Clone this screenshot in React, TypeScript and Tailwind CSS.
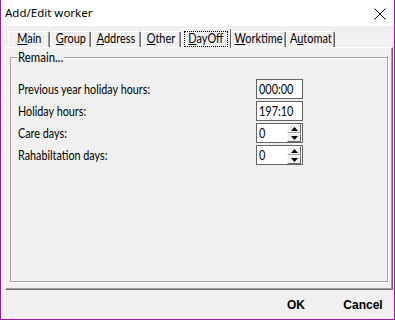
import React from "react";

const lato = { fontFamily: "Lato, 'Liberation Sans', sans-serif" };

type Tab = { label: string; key: number; w: string; selected?: boolean };

const tabs: Tab[] = [
  { label: "Main", key: 0, w: "w-[42px]" },
  { label: "Group", key: 0, w: "w-[41px]" },
  { label: "Address", key: 0, w: "w-[50px]" },
  { label: "Other", key: 0, w: "w-[40px]" },
  { label: "DayOff", key: 0, w: "w-[50px]", selected: true },
  { label: "Worktime", key: 0, w: "w-[55px]" },
  { label: "Automat", key: 1, w: "w-[49px]" },
];

function TabLabel({ t }: { t: Tab }) {
  const a = t.label.slice(0, t.key);
  const b = t.label.slice(t.key, t.key + 1);
  const c = t.label.slice(t.key + 1);
  return (
    <span className="inline-block scale-x-[0.84] text-[13px] leading-none whitespace-nowrap">
      {a}
      <u className="underline-offset-[1px]">{b}</u>
      {c}
    </span>
  );
}

function Up() {
  return (
    <svg width="7" height="4" viewBox="0 0 7 4">
      <path d="M3.5 0 L7 4 L0 4 Z" fill="#000" />
    </svg>
  );
}
function Down() {
  return (
    <svg width="7" height="4" viewBox="0 0 7 4">
      <path d="M0 0 L7 0 L3.5 4 Z" fill="#000" />
    </svg>
  );
}

function Val({ value }: { value: string }) {
  return (
    <span className="flex-1 flex items-center pl-[2px] text-black leading-none">
      <span className="inline-block origin-left scale-x-[0.84] text-[13px] leading-none">{value}</span>
    </span>
  );
}

function SpinBox({ value }: { value: string }) {
  return (
    <div className="h-[20px] w-[47px] border border-[#646464] bg-white flex items-center">
      <Val value={value} />
      <div className="flex flex-col mr-px">
        <div className="w-[14px] h-[9px] bg-[#f0f0f0] border-t border-l border-white border-r border-b border-r-[#696969] border-b-[#a0a0a0] flex items-center justify-center">
          <Up />
        </div>
        <div className="w-[14px] h-[9px] bg-[#f0f0f0] border-t border-l border-white border-r border-b border-r-[#696969] border-b-[#696969] flex items-center justify-center">
          <Down />
        </div>
      </div>
    </div>
  );
}

function TextBox({ value }: { value: string }) {
  return (
    <div className="h-[20px] w-[47px] border border-[#646464] bg-white flex items-center">
      <Val value={value} />
    </div>
  );
}

export default function App() {
  const rows: { label: string; field: React.ReactNode }[] = [
    { label: "Previous year holiday hours:", field: <TextBox value="000:00" /> },
    { label: "Holiday hours:", field: <TextBox value="197:10" /> },
    { label: "Care days:", field: <SpinBox value="0" /> },
    { label: "Rahabiltation days:", field: <SpinBox value="0" /> },
  ];

  return (
    <div className="w-[395px] h-[320px] flex flex-col border-x border-b border-[#9c1c9c] bg-[#f0f0f0] overflow-hidden">
      {/* Title bar */}
      <div className="h-[26px] bg-white flex items-center justify-between pl-[4px] pr-[8px] shrink-0">
        <span className="text-[11.5px] text-black" style={{ fontFamily: "'Noto Sans', 'Liberation Sans', sans-serif" }}>
          Add/Edit worker
        </span>
        <svg width="12" height="12" viewBox="0 0 12 12" className="mt-[2px]">
          <path d="M0.5 0.5 L11.5 11.5 M11.5 0.5 L0.5 11.5" stroke="#000" strokeWidth="1" />
        </svg>
      </div>

      {/* Tabs */}
      <div className="flex items-end h-[21px] pl-[7px] relative z-10 shrink-0 text-black" style={lato}>
        {tabs.map((t) =>
          t.selected ? (
            <div
              key={t.label}
              className={`${t.w} h-[20px] bg-[#f0f0f0] border-l border-t border-white border-r border-r-[#696969] rounded-t-[2px] flex items-start justify-center pt-[2px] px-[2px] -mb-px`}
            >
              <div className="w-full h-[16px] outline outline-1 outline-dotted outline-black -outline-offset-1 flex items-center justify-center pb-px">
                <TabLabel t={t} />
              </div>
            </div>
          ) : (
            <div
              key={t.label}
              className={`${t.w} h-[16px] border-l border-t border-white border-r border-r-[#696969] rounded-t-[2px] shadow-[inset_-1px_0_0_#a0a0a0] flex items-center justify-center pb-[2px]`}
            >
              <TabLabel t={t} />
            </div>
          )
        )}
      </div>

      {/* Panel */}
      <div className="ml-[4px] mr-px w-[388px] h-[243px] border-l border-t border-white border-r border-b border-r-[#696969] border-b-[#696969] shadow-[inset_-1px_-1px_0_#a0a0a0] shrink-0">
        <div
          className="relative ml-[4px] mt-[9px] w-[378px] h-[225px] border border-[#a0a0a0] shadow-[inset_1px_1px_0_#ffffff,1px_1px_0_#ffffff]"
          style={lato}
        >
          <span className="absolute left-[6px] -top-[8px] bg-[#f0f0f0] w-[47px] h-[15px] flex items-center pl-px text-black">
            <span className="inline-block origin-left scale-x-[0.88] text-[13px] leading-none whitespace-nowrap">Remain...</span>
          </span>
          <div className="mt-[21px] pl-[7px] flex flex-col gap-[2px]">
            {rows.map((r) => (
              <div key={r.label} className="grid grid-cols-[238px_47px] items-center h-[20px]">
                <span className="flex items-center text-black whitespace-nowrap leading-none">
                  <span className="inline-block origin-left scale-x-[0.83] text-[13px] leading-none">{r.label}</span>
                </span>
                {r.field}
              </div>
            ))}
          </div>
        </div>
      </div>

      {/* Footer */}
      <div className="flex-1 flex items-center justify-end gap-[7px] pr-px" style={{ fontFamily: "'Liberation Sans', Arial, sans-serif" }}>
        <button className="w-[60px] h-[25px] text-[12px] font-bold text-black">OK</button>
        <button className="w-[60px] h-[25px] text-[12px] font-bold text-black">Cancel</button>
      </div>
    </div>
  );
}
